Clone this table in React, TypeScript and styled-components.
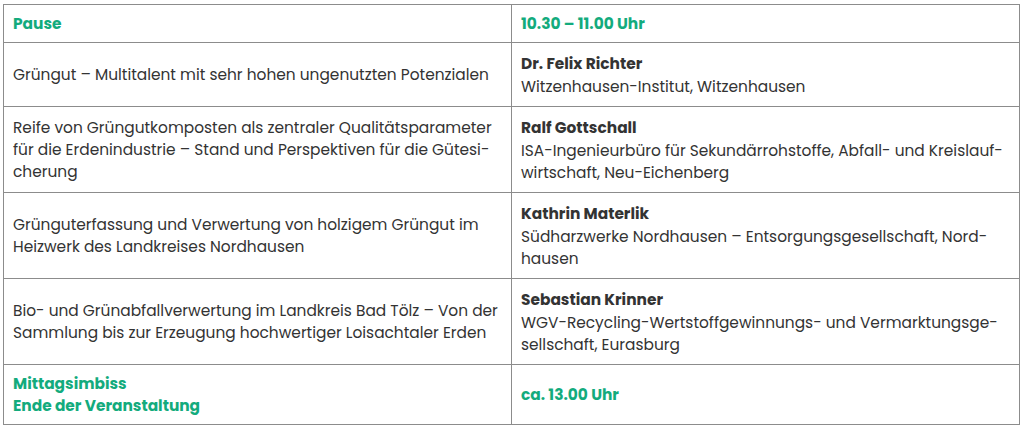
import React from "react";
import styled, { createGlobalStyle } from "styled-components";

const Global = createGlobalStyle`
  html, body { margin: 0; padding: 0; background: #fff; }
  body { font-family: "Poppins", "Open Sans", "Noto Sans", sans-serif; }
`;

const Wrap = styled.div`
  padding: 4px 0 0 3px;
`;

const Table = styled.table`
  width: 1017px;
  border-collapse: collapse;
  table-layout: fixed;
  font-size: 15.4px;
  line-height: 22px;
  color: #333;
`;

const Cell = styled.td<{ $accent?: boolean }>`
  border: 1px solid #8c8c8c;
  padding: ${(p) => (p.$accent ? "7.5px 9px" : "8px 9px")};
  vertical-align: middle;
  font-weight: ${(p) => (p.$accent ? 700 : 400)};
  color: ${(p) => (p.$accent ? "#13ab7d" : "#333")};
`;

const Name = styled.div`
  font-weight: 700;
  line-height: 25px;
  color: #333;
`;

const Line = styled.div``;

type Talk = { title: string; name: string; org: string };

const talks: Talk[] = [
  {
    title: "Grüngut – Multitalent mit sehr hohen ungenutzten Potenzialen",
    name: "Dr. Felix Richter",
    org: "Witzenhausen-Institut, Witzenhausen",
  },
  {
    title:
      "Reife von Grüngutkomposten als zentraler Qualitätsparameter für die Erdenindustrie – Stand und Perspektiven für die Gütesi\u00ADcherung",
    name: "Ralf Gottschall",
    org: "ISA-Ingenieurbüro für Sekundärrohstoffe, Abfall- und Kreislauf\u00ADwirtschaft, Neu-Eichenberg",
  },
  {
    title:
      "Grünguterfassung und Verwertung von holzigem Grüngut im Heizwerk des Landkreises Nordhausen",
    name: "Kathrin Materlik",
    org: "Südharzwerke Nordhausen – Entsorgungsgesellschaft, Nord\u00ADhausen",
  },
  {
    title:
      "Bio- und Grünabfallverwertung im Landkreis Bad Tölz – Von der Sammlung bis zur Erzeugung hochwertiger Loisachtaler Erden",
    name: "Sebastian Krinner",
    org: "WGV-Recycling-Wertstoffgewinnungs- und Vermarktungsge\u00ADsellschaft, Eurasburg",
  },
];

export default function App() {
  return (
    <>
      <Global />
      <Wrap>
        <Table>
          <tbody>
            <tr>
              <Cell $accent>Pause</Cell>
              <Cell $accent>10.30 – 11.00 Uhr</Cell>
            </tr>
            {talks.map((t) => (
              <tr key={t.name}>
                <Cell>{t.title}</Cell>
                <Cell>
                  <Name>{t.name}</Name>
                  <Line>{t.org}</Line>
                </Cell>
              </tr>
            ))}
            <tr>
              <Cell $accent>
                <Line>Mittagsimbiss</Line>
                <Line>Ende der Veranstaltung</Line>
              </Cell>
              <Cell $accent>ca. 13.00 Uhr</Cell>
            </tr>
          </tbody>
        </Table>
      </Wrap>
    </>
  );
}
